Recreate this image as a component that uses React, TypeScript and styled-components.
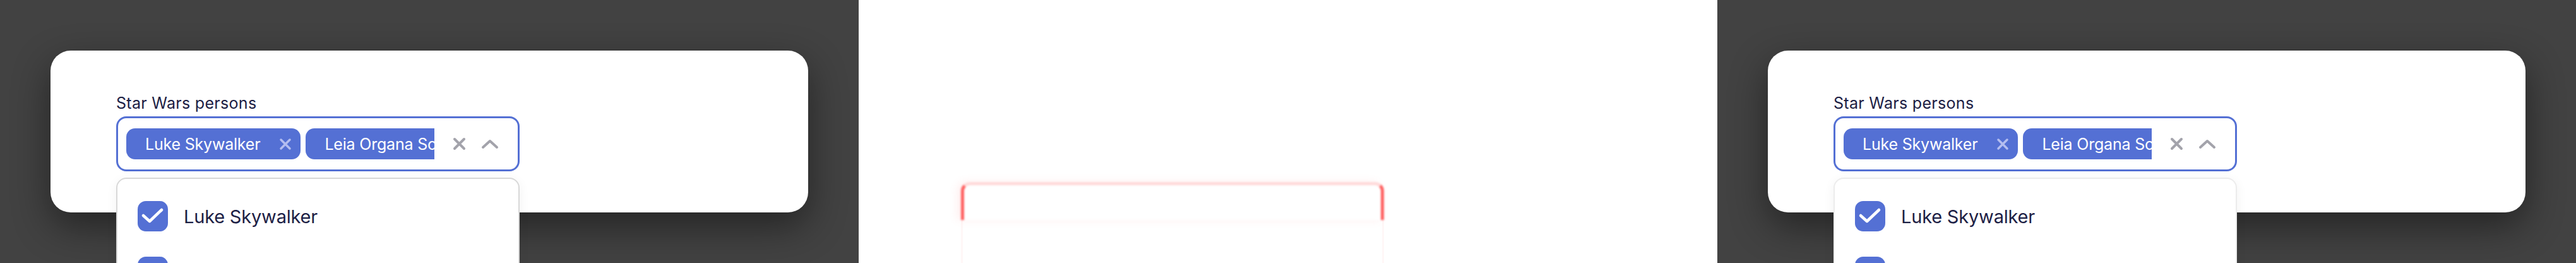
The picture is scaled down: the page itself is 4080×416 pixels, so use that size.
import React from 'react';
import styled, { createGlobalStyle } from 'styled-components';

const GlobalStyle = createGlobalStyle`
  html, body {
    margin: 0;
    padding: 0;
    width: 4080px;
    height: 416px;
    overflow: hidden;
    background: #ffffff;
  }
  * { box-sizing: border-box; }
`

const Strip = styled.div`
  display: grid;
  grid-template-columns: repeat(3, 1360px);
  height: 416px;
  overflow: hidden;
  font-family: Inter, "Liberation Sans", sans-serif;
`

const DarkPanel = styled.div`
  background: #424242;
  padding: 80px;
  overflow: hidden;
  position: relative;
`

const DiffPanel = styled.div`
  background: #ffffff;
  padding: 288px 0 0 162px;
  overflow: hidden;
`

const Card = styled.div`
  width: 1200px;
  height: 256px;
  background: #ffffff;
  border-radius: 32px;
  box-shadow: 0 22px 60px rgba(0, 0, 0, 0.45);
  padding: 68px 0 0 104px;
  position: relative;
`

const Field = styled.div`
  width: 639px;
  position: relative;
`

const Label = styled.div`
  font-size: 25px;
  line-height: 31px;
  color: #1c2044;
  margin-bottom: 5px;
  letter-spacing: 0.3px;
`

const Control = styled.div`
  display: flex;
  align-items: center;
  height: 87px;
  border: 3px solid #5470d4;
  border-radius: 16px;
  padding: 0 30px 0 13px;
`

const Values = styled.div`
  flex: 1;
  display: flex;
  gap: 8px;
  overflow: hidden;
  min-width: 0;
`

const Chip = styled.div`
  flex-shrink: 0;
  display: flex;
  align-items: center;
  height: 49px;
  padding: 0 14px 0 30px;
  gap: 30px;
  background: #5470d4;
  border-radius: 14px;
  color: #ffffff;
  font-size: 25px;
  letter-spacing: -0.2px;
  white-space: nowrap;
`

const Indicators = styled.div`
  display: flex;
  align-items: center;
  gap: 24px;
  margin-left: 29px;
`

const Menu = styled.div<{ $border: string }>`
  position: absolute;
  left: 0;
  top: 133px;
  width: 639px;
  height: 300px;
  background: #ffffff;
  border: 2px solid ${p => p.$border};
  border-radius: 16px;
  box-shadow: 0 4px 18px rgba(0, 0, 0, 0.06);
  padding: 15px 0;
  z-index: 2;
`

const Option = styled.div`
  display: flex;
  align-items: center;
  height: 88px;
  padding-left: 32px;
  gap: 25px;
  font-size: 29px;
  letter-spacing: -0.2px;
  color: #1d2145;
`

const Box = styled.div`
  width: 48px;
  height: 48px;
  border-radius: 13px;
  background: #5470d4;
  display: flex;
  align-items: center;
  justify-content: center;
`

const DiffOutline = styled.div`
  width: 670px;
  height: 60px;
  border: 5px solid rgba(255, 70, 70, 0.85);
  border-top-color: rgba(255, 120, 120, 0.28);
  border-bottom: none;
  border-radius: 14px 14px 0 0;
  filter: blur(1.4px);
  box-shadow: -6px 0 14px rgba(255, 120, 120, 0.12);
`

const DiffTail = styled.div`
  width: 670px;
  height: 80px;
  border-left: 3px solid rgba(255, 100, 100, 0.05);
  border-right: 3px solid rgba(255, 100, 100, 0.05);
`

const ChipX = () => (
  <svg width="20" height="20" viewBox="0 0 20 20">
    <path d="M3 3 L17 17 M17 3 L3 17" stroke="#b4bef0" strokeWidth="3.5" strokeLinecap="round" />
  </svg>
)

const ClearX = () => (
  <svg width="21" height="21" viewBox="0 0 21 21">
    <path d="M3 3 L18 18 M18 3 L3 18" stroke="#a3a3ab" strokeWidth="4" strokeLinecap="round" />
  </svg>
)

const ChevronUp = () => (
  <svg width="28" height="16" viewBox="0 0 28 16">
    <path d="M3 13 L14 3 L25 13" stroke="#a3a3ab" strokeWidth="4" fill="none" strokeLinecap="round" strokeLinejoin="round" />
  </svg>
)

const Check = () => (
  <svg width="48" height="48" viewBox="0 0 48 48">
    <path d="M9 23 L19 32 L38 14" stroke="#ffffff" strokeWidth="4.5" fill="none" strokeLinecap="round" strokeLinejoin="round" />
  </svg>
)

const selected = ['Luke Skywalker', 'Leia Organa Solo'];

function SelectCard({ menuBorder }: { menuBorder: string }) {
  return (
    <Card>
      <Field>
        <Label>Star Wars persons</Label>
        <Control>
          <Values>
            {selected.map(name => (
              <Chip key={name}>
                {name}
                <ChipX />
              </Chip>
            ))}
          </Values>
          <Indicators>
            <ClearX />
            <ChevronUp />
          </Indicators>
        </Control>
        <Menu $border={menuBorder}>
          {selected.map(name => (
            <Option key={name}>
              <Box><Check /></Box>
              {name}
            </Option>
          ))}
        </Menu>
      </Field>
    </Card>
  )
}

function App() {
  return (
    <>
      <GlobalStyle />
      <Strip>
        <DarkPanel>
          <SelectCard menuBorder="#d8d8d8" />
        </DarkPanel>
        <DiffPanel>
          <DiffOutline />
          <DiffTail />
        </DiffPanel>
        <DarkPanel>
          <SelectCard menuBorder="#ececec" />
        </DarkPanel>
      </Strip>
    </>
  );
}

export default App;
